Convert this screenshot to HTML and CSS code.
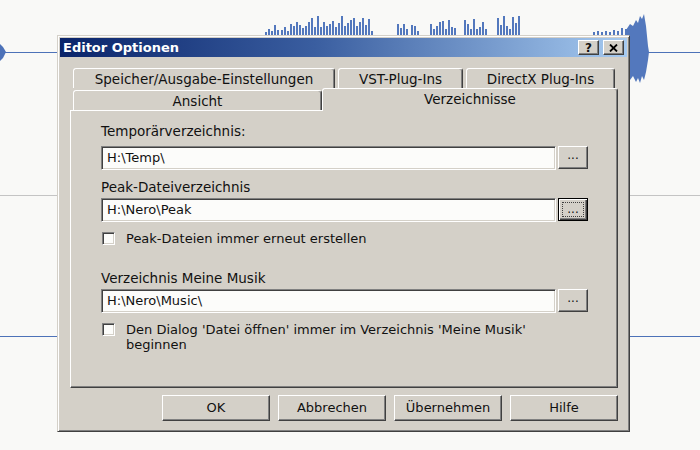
FILE: index.html
```html
<!DOCTYPE html>
<html>
  <head>
    <meta charset="utf-8">
    <title>Editor Optionen</title>
    <link rel="stylesheet" href="styles.css">
  </head>
  <body>
    <svg class="wave" width="700" height="450" viewBox="0 0 700 450">
      <line x1="0" y1="195.5" x2="700" y2="195.5" stroke="#c4c4c4" />
      <line x1="0" y1="52.5" x2="700" y2="52.5" stroke="#4d72b8" />
      <line x1="0" y1="336.5" x2="700" y2="336.5" stroke="#4d72b8" />
      <polygon points="0,44 3,47 6,52 3,58 0,61" fill="#4d72b8" />
      <path stroke="#5378bd" stroke-width="2" fill="none"
        d="M266 35V32 M269 35V29 M272 35V31 M275 35V25 M278 35V30 M282 35V30 M285 35V27 M288 35V31
           M291 35V24 M294 35V26 M297 35V22 M300 35V25 M303 35V28 M306 35V26 M309 35V22 M312 35V18
           M315 35V27 M318 35V16 M321 35V27 M324 35V22 M327 35V26 M330 35V24 M333 35V21 M336 35V27
           M339 35V23 M342 35V16 M345 35V26 M348 35V23 M351 35V20 M354 35V18 M357 35V26 M360 35V22
           M363 35V18 M366 35V25 M369 35V19 M372 35V31 M398 35V24 M401 35V28 M404 35V24 M407 35V29
           M412 35V25 M415 35V26 M418 35V31 M431 35V24 M434 35V29 M437 35V26 M440 35V22 M443 35V21
           M446 35V29 M449 35V20 M452 35V27 M455 35V28 M465 35V20 M468 35V24 M471 35V29 M474 35V19
           M477 35V29 M480 35V27 M483 35V22 M486 35V29 M498 35V18 M501 35V25 M504 35V16 M507 35V26
           M510 35V29 M513 35V17 M516 35V23 M519 35V16 M594 35V32 M598 35V31 M602 35V32 M606 35V31
           M610 35V32 M614 35V30 M618 35V31 M622 35V28 M626 35V29" />
      <polygon fill="#5378bd"
        points="626,30 630,24 633,26 636,20 638,23 640,16 642,19 644,14 646,26 648,46 649,52 648,60 646,72 644,80 642,76 640,83 638,78 636,82 633,76 630,80 626,74" />
    </svg>

    <div class="dialog">
      <div class="titlebar">
        <span class="title">Editor Optionen</span>
        <div class="caption-buttons">
          <span class="caption-btn help">?</span>
          <span class="caption-btn">
            <svg width="9" height="8" viewBox="0 0 9 8">
              <path d="M1 0.5 L8 7.5 M8 0.5 L1 7.5" stroke="#000" stroke-width="1.8" />
            </svg>
          </span>
        </div>
      </div>

      <div class="dialog-body">
        <div class="tabs">
          <div class="tab-row back">
            <div class="tab" style="width: 262px">Speicher/Ausgabe-Einstellungen</div>
            <div class="tab" style="width: 125px">VST-Plug-Ins</div>
            <div class="tab" style="width: 149px">DirectX Plug-Ins</div>
          </div>
          <div class="tab-row front">
            <div class="tab" style="width: 249px">Ansicht</div>
            <div class="tab active" style="width: 296px">Verzeichnisse</div>
          </div>
        </div>

        <div class="panel">
          <div class="field-label first">Temporärverzeichnis:</div>
          <div class="field">
            <div class="input">H:\Temp\</div>
            <div class="browse">...</div>
          </div>

          <div class="field-label">Peak-Dateiverzeichnis</div>
          <div class="field">
            <div class="input">H:\Nero\Peak</div>
            <div class="browse default"><span>...</span></div>
          </div>

          <div class="check">
            <span class="box"></span>
            <span class="check-text">Peak-Dateien immer erneut erstellen</span>
          </div>

          <div class="field-label">Verzeichnis Meine Musik</div>
          <div class="field">
            <div class="input">H:\Nero\Music\</div>
            <div class="browse">...</div>
          </div>

          <div class="check">
            <span class="box"></span>
            <span class="check-text">Den Dialog 'Datei öffnen' immer im Verzeichnis 'Meine Musik' beginnen</span>
          </div>
        </div>

        <div class="buttons">
          <div class="button">OK</div>
          <div class="button">Abbrechen</div>
          <div class="button">Übernehmen</div>
          <div class="button">Hilfe</div>
        </div>
      </div>
    </div>
  </body>
</html>
```

FILE: styles.css
```css
body {
  margin: 0;
  width: 700px;
  height: 450px;
  position: relative;
  overflow: hidden;
  background: #f9f9f7;
  font-family: "DejaVu Sans", Verdana, sans-serif;
  font-size: 13px;
  color: #111;
}
.wave {
  position: absolute;
  left: 0;
  top: 0;
}
.dialog {
  position: absolute;
  left: 57px;
  top: 35px;
  width: 573px;
  height: 397px;
  box-sizing: border-box;
  background: #d4d0c8;
  border: 1px solid;
  border-color: #d4d0c8 #404040 #404040 #d4d0c8;
  box-shadow: inset 1px 1px #fff, inset -1px -1px #808080;
  padding: 2px;
  display: flex;
  flex-direction: column;
}
.titlebar {
  height: 19px;
  flex: none;
  display: flex;
  align-items: center;
  justify-content: space-between;
  padding: 0 3px;
  background: linear-gradient(to right, #0a246a 0%, #3a5ea0 45%, #a6caf0 100%);
}
.title {
  color: #fff;
  font-weight: bold;
  font-size: 13px;
}
.caption-buttons {
  display: flex;
  gap: 4px;
}
.caption-btn {
  width: 21px;
  height: 15px;
  box-sizing: border-box;
  background: #d4d0c8;
  border: 1px solid;
  border-color: #fff #404040 #404040 #fff;
  box-shadow: inset -1px -1px #808080;
  display: flex;
  align-items: center;
  justify-content: center;
  font-weight: bold;
  font-size: 12px;
  line-height: 1;
}
.dialog-body {
  flex: 1;
  display: flex;
  flex-direction: column;
  padding: 11px 9px 8px 10px;
}
.tabs {
  height: 42px;
  flex: none;
  position: relative;
  z-index: 1;
}
.tab-row {
  display: flex;
  gap: 3px;
  padding-left: 3px;
}
.tab-row.back {
  height: 20px;
}
.tab-row.front {
  height: 22px;
  gap: 0;
}
.tab {
  box-sizing: border-box;
  height: 20px;
  border: 1px solid;
  border-bottom: none;
  border-color: #fff #404040 transparent #fff;
  box-shadow: inset -1px 0 #808080;
  border-radius: 3px 3px 0 0;
  background: #d4d0c8;
  text-align: center;
  line-height: 21px;
  font-size: 13.5px;
}
.tab-row.front .tab {
  margin-top: 2px;
}
.tab-row.front .tab.active {
  margin-top: 0;
  height: 23px;
  line-height: 21px;
}
.panel {
  height: 278px;
  flex: none;
  box-sizing: border-box;
  border: 1px solid;
  border-color: #fff #404040 #404040 #fff;
  box-shadow: inset -1px -1px #808080;
  padding: 13px 29px 0 30px;
}
.field-label {
  line-height: 15px;
  margin-bottom: 3px;
  font-size: 13.5px;
}
.field-label.first {
  margin-bottom: 7px;
}
.field + .field-label {
  margin-top: 10px;
}
.check + .field-label {
  margin-top: 25px;
}
.field {
  display: flex;
  gap: 2px;
  height: 24px;
}
.input {
  flex: 1;
  box-sizing: border-box;
  background: #fcfcfa;
  border: 1px solid;
  border-color: #808080 #fff #fff #808080;
  box-shadow: inset 1px 1px #404040, inset -1px -1px #d4d0c8;
  padding: 0 5px;
  line-height: 22px;
}
.browse {
  width: 30px;
  height: 23px;
  box-sizing: border-box;
  border: 1px solid;
  border-color: #fff #404040 #404040 #fff;
  box-shadow: inset -1px -1px #808080;
  text-align: center;
  line-height: 17px;
  font-size: 12px;
}
.browse.default {
  border: 1px solid #000;
  box-shadow: inset 1px 1px #fff, inset -1px -1px #404040, inset -2px -2px #808080;
  padding: 3px;
  line-height: 13px;
}
.browse.default span {
  display: block;
  height: 15px;
  border: 1px dotted #404040;
  box-sizing: border-box;
}
.check {
  display: flex;
  align-items: flex-start;
  margin-top: 9px;
  padding-left: 1px;
}
.box {
  width: 13px;
  height: 13px;
  flex: none;
  box-sizing: border-box;
  margin-top: 1px;
  background: #fcfcfa;
  border: 1px solid;
  border-color: #808080 #fff #fff #808080;
  box-shadow: inset 1px 1px #404040, inset -1px -1px #d4d0c8;
}
.check-text {
  margin-left: 11px;
  line-height: 15px;
  max-width: 430px;
}
.buttons {
  display: flex;
  justify-content: flex-end;
  gap: 8px;
  margin-top: 7px;
}
.button {
  width: 108px;
  height: 26px;
  box-sizing: border-box;
  border: 1px solid;
  border-color: #fff #404040 #404040 #fff;
  box-shadow: inset -1px -1px #808080;
  text-align: center;
  line-height: 24px;
}
```
